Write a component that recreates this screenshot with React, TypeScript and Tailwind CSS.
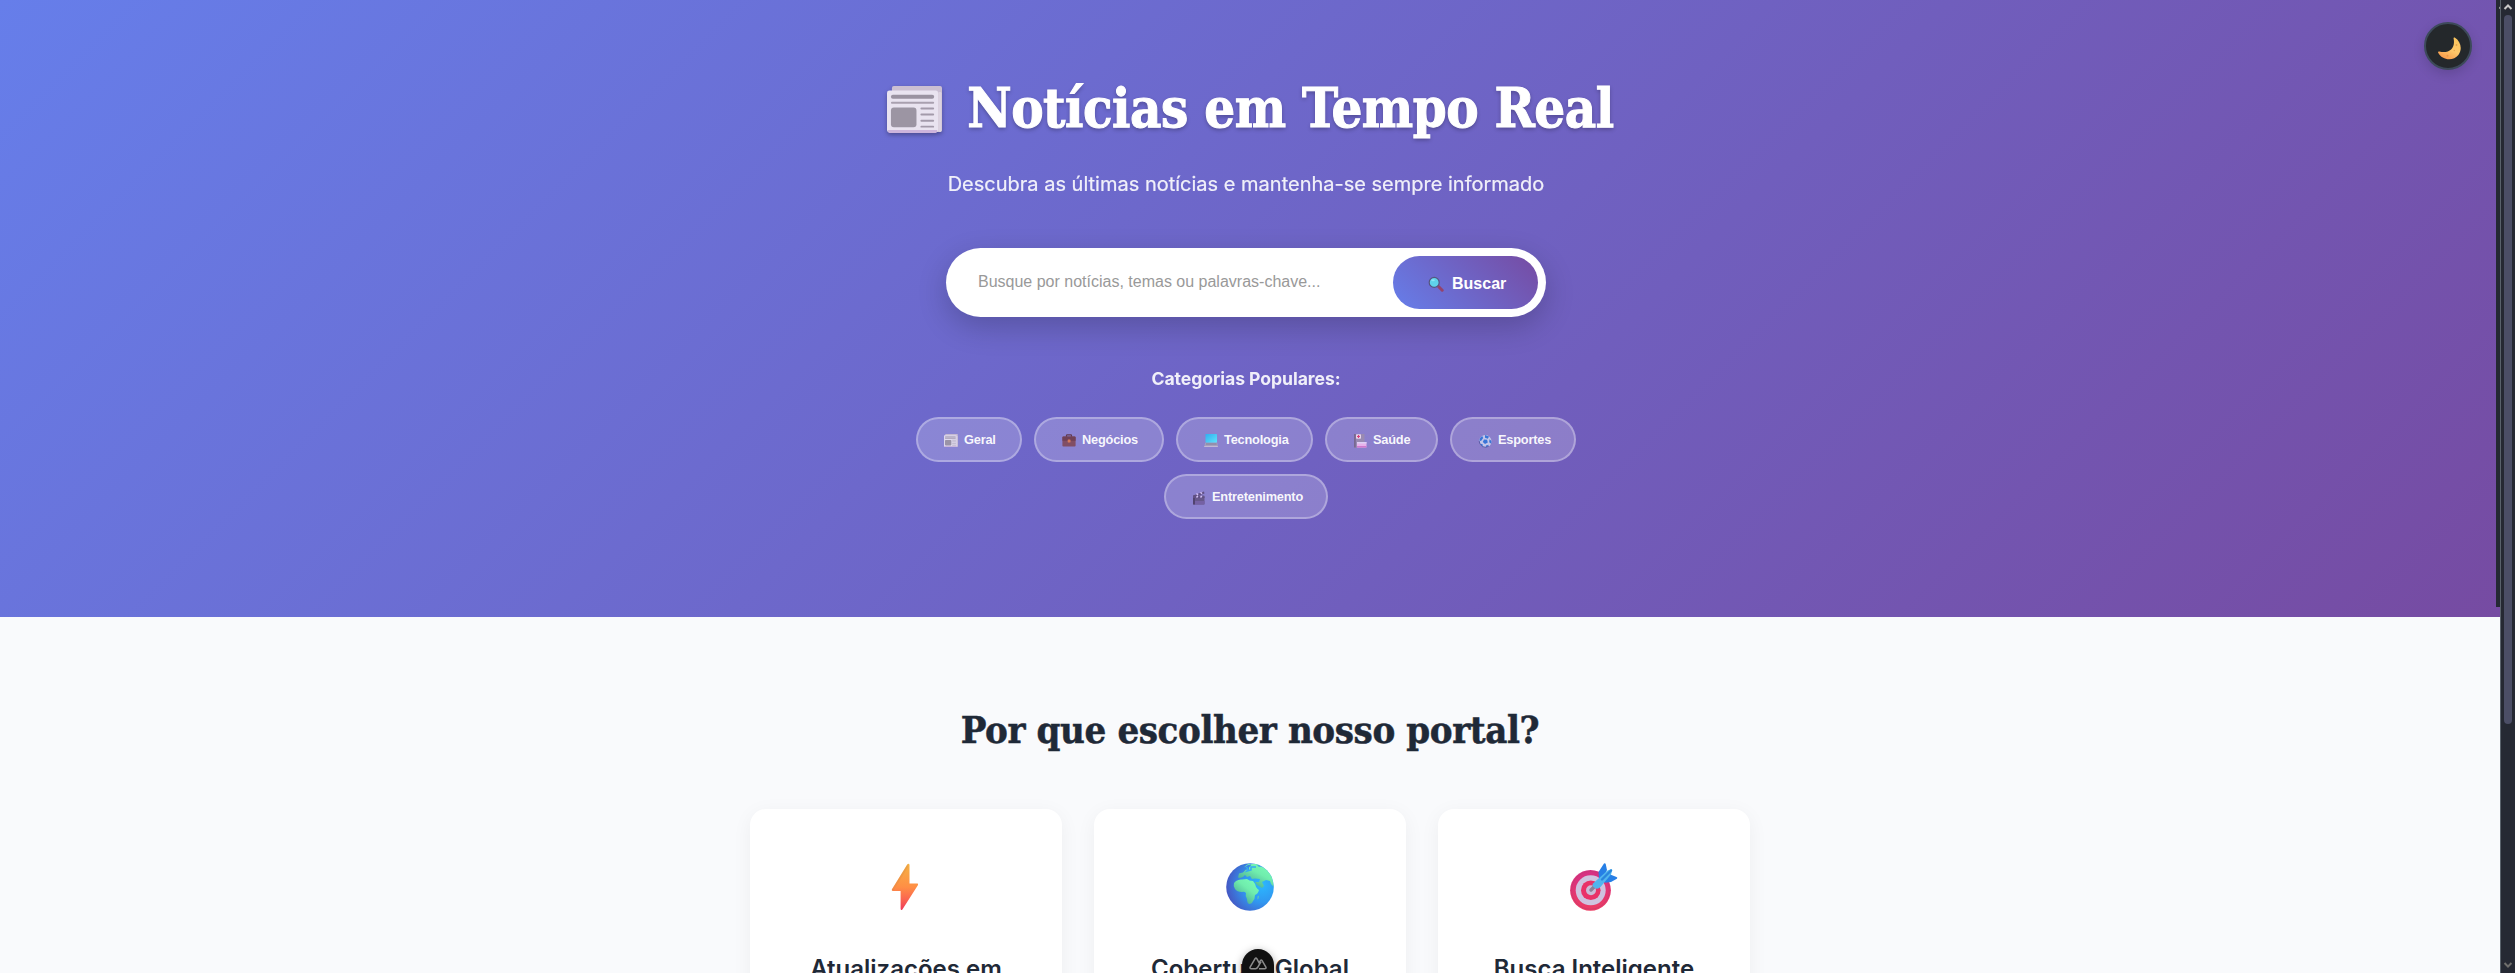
import type { ReactNode } from "react";

function Newspaper({ className }: { className?: string }) {
  return (
    <svg viewBox="0 0 57 48" className={className} preserveAspectRatio="none">
      <rect x="5" y="0" width="51" height="47" rx="2" fill="#cbbfd2" />
      <rect x="0" y="4.5" width="52" height="43" rx="2.5" fill="#e9e3f0" />
      <path d="M1 45h50v1.2a1.8 1.8 0 0 1-1.8 1.8H2.500A1.800 1.800 0 0 1 1 46.500z" fill="#cdb4dc" />
      <rect x="52" y="6" width="3.500" height="41" rx="1.500" fill="#dcd3e0" />
      <rect x="4" y="9" width="44" height="4" rx="2" fill="#9a92a1" />
      <rect x="4" y="16" width="44" height="2" rx="1" fill="#a9a0af" />
      <rect x="4" y="22" width="26" height="20" rx="3" fill="#9c95a3" />
      <path d="M35 23h12M35 29h12M35 35.500h12M35 41.500h12" stroke="#a39aaa" strokeWidth="2" strokeLinecap="round" />
    </svg>
  );
}

function Magnifier() {
  return (
    <svg viewBox="0 0 16 16" className="h-4 w-4">
      <path d="m10.500 10.500 3.700 3.700" stroke="#94426c" strokeWidth="3" strokeLinecap="round" />
      <circle cx="6.200" cy="6.400" r="5" fill="#5fd2ea" stroke="#56557f" strokeWidth="1.200" />
      <ellipse cx="5" cy="4.300" rx="1.800" ry="1" fill="#8be6f5" />
    </svg>
  );
}

function Briefcase() {
  return (
    <svg viewBox="0 0 14 13" className="h-[13px] w-[14px]">
      <path d="M4.500 3V1.400Q4.500.8 5.200.8h3.600q.7 0 .7.6V3" fill="none" stroke="#5b3240" strokeWidth="1.200" />
      <rect x=".4" y="2.500" width="13.200" height="10" rx="1" fill="#80495a" />
      <path d="M.4 3.500a1 1 0 0 1 1-1h11.200a1 1 0 0 1 1 1v3.300H.4z" fill="#6d3a49" />
      <rect x="5.700" y="5.600" width="2.800" height="2.800" rx=".4" fill="#e0784f" />
    </svg>
  );
}

function Laptop() {
  return (
    <svg viewBox="0 0 14 13" className="h-[13px] w-[14px]">
      <defs>
        <linearGradient id="screen" x1="0" y1="0" x2="1" y2="1">
          <stop offset="0" stopColor="#28b3f4" />
          <stop offset="1" stopColor="#5ceeff" />
        </linearGradient>
      </defs>
      <rect x="1.500" y="0" width="11.500" height="8.700" rx=".6" fill="url(#screen)" />
      <path d="M1.200 8.700h12L14 13H.2z" fill="#aaa3bd" />
      <path d="M2 9.500h10.500l.2 1H1.800z" fill="#7e8093" />
      <path d="M.3 12h13.500v1H.2z" fill="#c9bfd6" />
    </svg>
  );
}

function Hospital() {
  return (
    <svg viewBox="0 0 14 14" className="h-[14px] w-[14px]">
      <rect x="1" y="0" width="10.500" height="13.500" rx=".5" fill="#9b8cb0" />
      <path d="M1 0h1.800v13.500H1z" fill="#75678b" />
      <rect x="3" y=".3" width="5" height="4.500" rx=".8" fill="#f0dcee" />
      <path d="M5.500 1v3M4 2.500h3" stroke="#e33b72" strokeWidth="1.100" />
      <rect x="4" y="8" width="9.500" height="5.500" rx=".5" fill="#f1b9ef" />
      <path d="M4 8h9.500v1.500H4z" fill="#e6d9fb" />
      <path d="M4 12h9.500v1.500H4z" fill="#d978d0" />
    </svg>
  );
}

function SoccerBall() {
  return (
    <svg viewBox="0 0 14 14" className="h-[14px] w-[14px]">
      <circle cx="7.300" cy="7.300" r="6.200" fill="#c9cdec" />
      <path d="M1.200 6.500A6.200 6.200 0 0 1 4.200 2l1 1.900L3 7zM7 1l4 1.500-1.200 2.300L7 3.800zM6 5.500l3.100.2.700 2.900-2.800 1.500L4.800 8zM11.500 5.200l2 1.800-.3 2.700-2-1.500zM2 9.500l2.600.8.300 2.500q-2-1-2.900-3.300zM8 11.500l3-.7q-1 2-3.500 2.700z" fill="#3174d9" />
      <path d="M1.200 7a6.200 6.200 0 0 0 9.600 5.300" fill="none" stroke="#5454a2" strokeWidth="1" />
    </svg>
  );
}

function Clapper() {
  return (
    <svg viewBox="0 0 14 14" className="h-[14px] w-[14px]">
      <rect x="1" y="4.500" width="11.500" height="9" rx=".8" fill="#625383" />
      <path d="M1 5h2v8.500H1z" fill="#4b3d65" />
      <path d="M3 10h9.500v3.500H3z" fill="#735ea0" />
      <path d="m1 4.500 11-4 .5 2-8.500 3.200h8.500v1.300H1z" fill="#5c4b7c" />
      <path d="m4.500 2.500 1.500 1.500M8.500 1.200 10 2.700M4.500 6.500 5.800 5M8.500 6.500 9.800 5" stroke="#d9c6fa" strokeWidth="1.500" />
    </svg>
  );
}

function Moon() {
  return (
    <svg viewBox="0 0 24 24" className="mt-[4px] ml-[2px] h-6 w-6">
      <defs>
        <linearGradient id="moon" x1=".8" y1="0" x2=".3" y2="1">
          <stop offset="0" stopColor="#f9c45c" />
          <stop offset=".55" stopColor="#ffc86a" />
          <stop offset="1" stopColor="#f99a4b" />
        </linearGradient>
      </defs>
      <path d="M17.700 1.600C24 5.500 25.600 13.500 21.400 19 16.300 25.500 5 24.300 1.200 16.700c-.5-1 .2-1.500 1.200-1.200 9.600 2.500 16.300-3.400 14.200-13-.2-1 .3-1.400 1.100-.9z" fill="url(#moon)" />
      <circle cx="19.500" cy="9" r=".9" fill="#e4a149" />
      <circle cx="17.300" cy="14.500" r=".8" fill="#e9a651" />
      <circle cx="10.500" cy="19.700" r="1" fill="#e8974a" />
    </svg>
  );
}

function Bolt() {
  return (
    <svg viewBox="0 0 48 48" className="mr-[2px] h-12 w-12">
      <defs>
        <linearGradient id="bolt" x1="0" y1="0" x2="0" y2="1">
          <stop offset="0" stopColor="#f5b243" />
          <stop offset=".5" stopColor="#ff8f45" />
          <stop offset=".75" stopColor="#fb6850" />
          <stop offset="1" stopColor="#ee3a5b" />
        </linearGradient>
      </defs>
      <path d="M26.400 1.200 11 26.200q-.8 1.800 1 1.800h7.600v17.800q.3 2 1.800.6L37 21.900q.6-1.400-.9-1.400h-7.600V1.800q-.6-1.800-2.100-.6z" fill="url(#bolt)" />
      <path d="M26.400 1.200 11 26.200q-.8 1.800 1 1.800L27 4z" fill="#d98a45" opacity=".35" />
    </svg>
  );
}

function Globe() {
  return (
    <svg viewBox="0 0 48 48" className="h-12 w-12">
      <defs>
        <radialGradient id="ocean" cx=".75" cy=".45" r=".75">
          <stop offset="0" stopColor="#2bb8ff" />
          <stop offset=".5" stopColor="#3197f0" />
          <stop offset="1" stopColor="#4558c4" />
        </radialGradient>
        <linearGradient id="land" x1="1" y1="0" x2=".2" y2="1">
          <stop offset="0" stopColor="#7dffba" />
          <stop offset=".45" stopColor="#70edad" />
          <stop offset="1" stopColor="#429b8f" />
        </linearGradient>
        <clipPath id="globe-disc"><circle cx="24" cy="24" r="23.800" /></clipPath>
      </defs>
      <circle cx="24" cy="24" r="23.800" fill="url(#ocean)" />
      <g clipPath="url(#globe-disc)">
        <path d="M18 4.500 22 2l4-1h4q3-1 4 1l-3 .5q1 1.500 4 1L45 8l3 16-3-3-1-3-4-1-4 2 2 4-2 2-5-3-2-3h4l1-3-5-.5-3 .5-2-3-3 1-2-2-2 2-3 1-2-.5 1-4 4-1 3-3 3 1v-3l2-2-2-2-3 2z" fill="url(#land)" />
        <path d="M20 4q3 2 1 4l4-1v-3h5" fill="none" stroke="#35a9f2" strokeWidth="1.500" />
        <path d="M10 18q3-2 6-1.500l5-.5q2 2 6 2 2 2 3 6 2 3 3 3-1 4-4 5 0 4-2 6-1 3-4 3-2-1-2-5-2-3-1-6-2-2-4-1-5 0-7-3-2-3-1-6z" fill="url(#land)" />
        <path d="m33 32.500-.5 3-1 1v-3z" fill="#62cbb0" />
      </g>
    </svg>
  );
}

function Target() {
  return (
    <svg viewBox="0 0 48 48" className="h-12 w-12">
      <defs>
        <linearGradient id="ring" x1="0" y1="0" x2="0" y2="1">
          <stop offset="0" stopColor="#d52f86" />
          <stop offset="1" stopColor="#ed3c61" />
        </linearGradient>
      </defs>
      <circle cx="20.500" cy="27.300" r="20.400" fill="url(#ring)" />
      <circle cx="20.500" cy="27.300" r="18.900" fill="none" stroke="#c43a70" strokeWidth="1" opacity=".7" />
      <circle cx="20.700" cy="27.300" r="15" fill="#cfc3df" />
      <circle cx="20.800" cy="27.300" r="9.800" fill="#e93268" />
      <circle cx="21" cy="27.300" r="5" fill="#c9bdd8" />
      <path d="m21 27 4-4" stroke="#8b7f98" strokeWidth="3.500" strokeLinecap="round" />
      <path d="m29 15-.5-6L34 .5q1.200-.8 1.700.5L37 7l-4 9z" fill="#267fe6" />
      <path d="m33 18 6-7 7.500 3q1.500.8.400 1.700L41 19l-6 .7z" fill="#267fe6" />
      <path d="M23 20.500 37.500 7.500l4-1.500.8 1-1.300 4.500L30.500 24q-3 2.800-6 .8-3-2-1.500-4.300z" fill="#50b5ee" />
      <path d="M32 16.500 41 7.500" stroke="#2a85dd" strokeWidth="2.400" strokeLinecap="round" />
    </svg>
  );
}

const categories: { icon: ReactNode; label: string; width: string }[] = [
  { icon: <Newspaper className="h-[13px] w-[14px]" />, label: "Geral", width: "w-[106px]" },
  { icon: <Briefcase />, label: "Negócios", width: "w-[130px]" },
  { icon: <Laptop />, label: "Tecnologia", width: "w-[137px]" },
  { icon: <Hospital />, label: "Saúde", width: "w-[113px]" },
  { icon: <SoccerBall />, label: "Esportes", width: "w-[126px]" },
  { icon: <Clapper />, label: "Entretenimento", width: "w-[164px]" },
];

const features: { icon: ReactNode; title: string }[] = [
  { icon: <Bolt />, title: "Atualizações em Tempo Real" },
  { icon: <Globe />, title: "Cobertura Global" },
  { icon: <Target />, title: "Busca Inteligente" },
];

function Hero() {
  return (
    <header className="relative h-[617px] bg-[linear-gradient(135deg,#667eea_0%,#764ba2_100%)] pt-[72px] pr-[8px]">
      <div className="flex flex-col items-center text-white">
        <h1 className="flex h-[72px] items-center pl-[9px] font-['DejaVu_Serif_Condensed','DejaVu_Serif',serif] text-[54px] leading-[72px] font-bold tracking-[-0.5px] whitespace-nowrap [-webkit-text-stroke:1px_white] [text-shadow:0_2px_4px_rgba(0,0,0,0.3)]">
          <Newspaper className="mt-[3px] mr-[24px] h-[47px] w-[56px] drop-shadow-[0_2px_2px_rgba(0,0,0,0.3)]" />
          Notícias em Tempo Real
        </h1>
        <p className="mt-[24px] text-[20px] leading-8 opacity-90 [-webkit-text-stroke:0.2px_white]">Descubra as últimas notícias e mantenha-se sempre informado</p>
        <form className="mt-[48px] flex h-[69px] w-[600px] items-center rounded-full bg-white pr-2 pl-8 shadow-[0_10px_30px_rgba(0,0,0,0.2)]">
          <span className="flex-1 pb-[2px] font-['Liberation_Sans',sans-serif] text-[16px] leading-6 text-[#999]">Busque por notícias, temas ou palavras-chave...</span>
          <button type="button" className="flex h-[53px] w-[145px] items-center rounded-full bg-[linear-gradient(45deg,#667eea,#764ba2)] pt-[2px] pl-[35px] font-['Liberation_Sans',sans-serif] text-[16px] font-bold">
            <Magnifier />
            <span className="ml-[8px]">Buscar</span>
          </button>
        </form>
        <h2 className="mt-[48px] text-[17.600px] leading-7 font-bold tracking-[-0.05px] opacity-90">Categorias Populares:</h2>
        <div className="mt-[24px] flex w-[700px] flex-wrap justify-center gap-3">
          {categories.map((c) => (
            <button key={c.label} type="button" className={`flex h-[45px] items-center rounded-[25px] border-2 border-white/30 bg-white/20 pl-[26px] font-['Liberation_Sans',sans-serif] text-[12.800px] font-bold tracking-[-0.2px] text-white/95 ${c.width}`}>
              <span className="mt-[2px] w-[20px] opacity-90">{c.icon}</span>
              {c.label}
            </button>
          ))}
        </div>
      </div>
      <button type="button" className="absolute top-[22px] left-[2424px] flex h-12 w-12 items-center justify-center rounded-full border-2 border-[#3d4a5a] bg-[#24282b] shadow-[0_4px_12px_rgba(0,0,0,0.15)]">
        <Moon />
      </button>
      <div className="absolute top-0 right-[-2px] flex h-[607px] w-[6px] flex-col items-end bg-[#252933] pt-[4px]">
        <svg viewBox="0 0 3 5" className="h-[5px] w-[3px]">
          <path d="m.5 4.500 2-3" stroke="#c9c9c9" strokeWidth="1.500" />
        </svg>
        <div className="mt-[4px] w-[2px] flex-1 bg-[#4b4e62]" />
      </div>
    </header>
  );
}

export default function App() {
  return (
    <div className="relative flex h-[973px] w-[2515px] overflow-hidden bg-[#f9fafc] font-['Inter',sans-serif]">
      <main className="w-[2500px]">
        <Hero />
        <section className="flex flex-col items-center pt-[80px]">
          <h2 className="h-[64px] font-['DejaVu_Serif_Condensed','DejaVu_Serif',serif] text-[38px] leading-[65px] font-bold tracking-[-0.4px] text-[#1f2937] [-webkit-text-stroke:0.5px_#1f2937]">Por que escolher nosso portal?</h2>
          <div className="mt-[48px] grid w-[1000px] grid-cols-3 gap-8">
            {features.map((f) => (
              <article key={f.title} className="flex h-[320px] flex-col items-center rounded-2xl bg-white px-8 pt-[54px] text-center shadow-[0_4px_20px_rgba(0,0,0,0.05)]">
                {f.icon}
                <h3 className="mt-[39px] text-[24px] leading-[38px] font-semibold text-[#1f2937]">{f.title}</h3>
              </article>
            ))}
          </div>
        </section>
      </main>
      <aside className="relative z-10 flex w-[15px] flex-col items-center border-l border-[#59626b] bg-[#252933]">
        <svg viewBox="0 0 10 8" className="mt-[3px] h-2 w-[10px] shrink-0">
          <path d="m1.500 6 3.500-3.500L8.500 6" fill="none" stroke="#c9c9c9" strokeWidth="2" />
        </svg>
        <div className="mt-[4px] h-[709px] w-2 shrink-0 rounded-full bg-[#4b4e66]" />
        <svg viewBox="0 0 10 8" className="mt-auto mb-[4px] h-2 w-[10px] shrink-0">
          <path d="m1.500 2 3.500 3.500L8.500 2" fill="none" stroke="#6e6e6c" strokeWidth="2" />
        </svg>
      </aside>
      <div className="absolute top-[949px] left-[1242px] flex h-[40px] w-8 justify-center rounded-full bg-[#111] pt-[8px] shadow-[0_2px_8px_rgba(0,0,0,0.35)]">
        <svg viewBox="0 0 18 13" className="h-[13px] w-[18px]">
          <path d="M10 11.700h6q1.500-.2.900-1.500l-3.800-6.600q-.9-1-1.700 0l-1 1.600M6.500 11.700H2q-1.500-.2-.9-1.500l5-8.600q.9-1 1.700 0l3 5.500M6.500 11.700q1.500 0 2.300-1.500l3.300-5.700" fill="none" stroke="#8c8c8c" strokeWidth="1.500" strokeLinejoin="round" />
        </svg>
      </div>
    </div>
  );
}
